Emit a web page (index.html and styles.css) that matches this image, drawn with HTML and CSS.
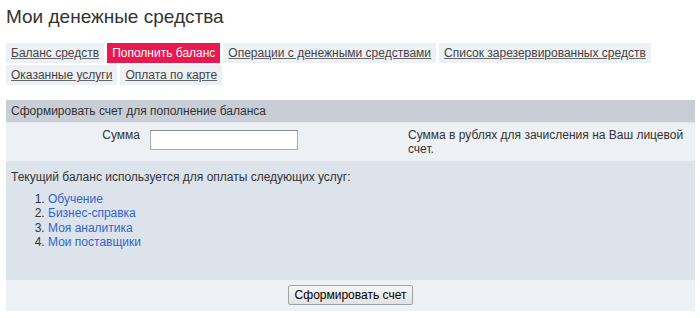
FILE: index.html
```html
<!DOCTYPE html>
<html>
	<head>
		<meta charset="utf-8" />
		<title>Мои денежные средства</title>
		<link rel="stylesheet" href="styles.css">
	</head>
	<body>
		<h1 class="title">Мои денежные средства</h1>
		<ul class="tabs">
			<li><a href="#">Баланс средств</a></li>
			<li class="active"><a href="#">Пополнить баланс</a></li>
			<li><a href="#">Операции с денежными средствами</a></li>
			<li><a href="#">Список зарезервированных средств</a></li>
			<li><a href="#">Оказанные услуги</a></li>
			<li><a href="#">Оплата по карте</a></li>
		</ul>
		<form class="panel">
			<div class="panel-head">Сформировать счет для пополнение баланса</div>
			<div class="amount-row">
				<label class="amount-label" for="sum">Сумма</label>
				<div class="amount-field"><input id="sum" type="text" /></div>
				<div class="amount-hint">Сумма в рублях для зачисления на Ваш лицевой счет.</div>
			</div>
			<div class="services">
				<p>Текущий баланс используется для оплаты следующих услуг:</p>
				<ol>
					<li><a href="#">Обучение</a></li>
					<li><a href="#">Бизнес-справка</a></li>
					<li><a href="#">Моя аналитика</a></li>
					<li><a href="#">Мои поставщики</a></li>
				</ol>
			</div>
			<div class="actions">
				<button type="button">Сформировать счет</button>
			</div>
		</form>
	</body>
</html>
```

FILE: styles.css
```css
body {
	margin: 0;
	padding: 0 5px 0 6px;
	font-family: "Liberation Sans", Arial, sans-serif;
	font-size: 12px;
	line-height: 14px;
	color: #333;
	background: #fff;
}

.title {
	margin: 5px 0 15px;
	font-size: 19px;
	line-height: 23px;
	font-weight: normal;
	color: #333;
}

.tabs {
	display: flex;
	flex-wrap: wrap;
	gap: 2px 3px;
	margin: 0;
	padding: 0;
	list-style: none;
}

.tabs li {
	background: #edf0f4;
	padding: 3px 5px 3px 5px;
}

.tabs a {
	color: #444;
	text-decoration: underline;
	text-decoration-color: #666;
}

.tabs .active {
	background: #e9184e;
}

.tabs .active a {
	color: #fff;
	text-decoration: none;
}

.panel {
	margin: 15px 0 0;
}

.panel-head {
	background: #c9ced6;
	padding: 4px 5px;
	border-bottom: 1px solid #e4e8ee;
}

.amount-row {
	display: grid;
	grid-template-columns: 139px 258px 1fr;
	background: #edf0f4;
}

.amount-row > * {
	padding: 5px;
}

.amount-label {
	text-align: right;
}

.amount-field input {
	box-sizing: border-box;
	width: 148px;
	height: 20px;
	margin: 2px 0 0;
	border: 1px solid #a9abaf;
	border-top-color: #8d9095;
	background: #fff;
	font: inherit;
}

.services {
	background: #dde3eb;
	padding: 9px 5px 31px;
}

.services p {
	margin: 0;
}

.services ol {
	margin: 8px 0 0;
	padding-left: 37px;
}

.services li {
	line-height: 14.3px;
	padding-left: 0;
}

.services a {
	color: #2f66cc;
	text-decoration: none;
}

.actions {
	background: #edf0f4;
	padding: 5px 5px 6px;
	text-align: center;
}

.actions button {
	height: 20px;
	padding: 0 6px;
	border: 1px solid #a3a3a3;
	border-radius: 2px;
	background: linear-gradient(#f6f6f6, #e3e3e3);
	color: #000;
	font-family: "Liberation Sans", Arial, sans-serif;
	font-size: 12px;
}
```
